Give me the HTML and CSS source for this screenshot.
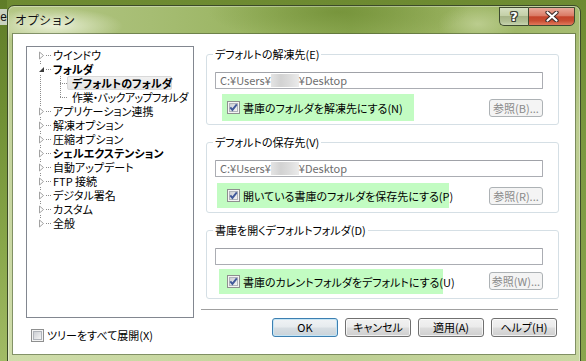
FILE: index.html
```html
<!DOCTYPE html>
<html lang="ja">
<head>
<meta charset="utf-8">
<title>オプション</title>
<link rel="stylesheet" href="styles.css">
</head>
<body>
<svg class="defs" width="0" height="0">
  <defs>
    <linearGradient id="cbfill" x1="0" y1="0" x2="1" y2="1">
      <stop offset="0" stop-color="#c9ccd1"/>
      <stop offset="1" stop-color="#f7f7f7"/>
    </linearGradient>
  </defs>
</svg>
<div class="desk-left"><div class="peek">e</div></div>
<div class="window">
  <div class="titlebar">
    <span class="title">オプション</span>
    <div class="caption-btns">
      <div class="cbtn help"><span>?</span></div>
      <div class="cbtn close">
        <svg width="16" height="11" viewBox="0 0 16 11">
          <path d="M3.5 1.5 L12.5 9.5 M12.5 1.5 L3.5 9.5" stroke="#3a2a28" stroke-width="4.2" stroke-linecap="round"/>
          <path d="M3.5 1.5 L12.5 9.5 M12.5 1.5 L3.5 9.5" stroke="#ffffff" stroke-width="2.2" stroke-linecap="round"/>
        </svg>
      </div>
    </div>
  </div>
  <div class="client">
    <div class="left-col">
      <div class="tree">
        <div class="row root"><span class="exp"><svg width="7" height="9" viewBox="0 0 7 9"><path d="M1.5 1 L5.5 4.5 L1.5 8 Z" fill="#fff" stroke="#a2a2a2"/></svg></span><span class="hd"></span><span class="lbl">ウインドウ</span></div>
        <div class="row root"><span class="exp"><svg width="7" height="9" viewBox="0 0 7 9"><path d="M6 2 L6 7 L1 7 Z" fill="#3c3c3c"/></svg></span><span class="hd"></span><span class="lbl bold">フォルダ</span></div>
        <div class="row child"><span class="conn mid"></span><span class="lbl bold sel">デフォルトのフォルダ</span></div>
        <div class="row child"><span class="conn last"></span><span class="lbl tight">作業・バックアップフォルダ</span></div>
        <div class="row root"><span class="exp"><svg width="7" height="9" viewBox="0 0 7 9"><path d="M1.5 1 L5.5 4.5 L1.5 8 Z" fill="#fff" stroke="#a2a2a2"/></svg></span><span class="hd"></span><span class="lbl">アプリケーション連携</span></div>
        <div class="row root"><span class="exp"><svg width="7" height="9" viewBox="0 0 7 9"><path d="M1.5 1 L5.5 4.5 L1.5 8 Z" fill="#fff" stroke="#a2a2a2"/></svg></span><span class="hd"></span><span class="lbl">解凍オプション</span></div>
        <div class="row root"><span class="exp"><svg width="7" height="9" viewBox="0 0 7 9"><path d="M1.5 1 L5.5 4.5 L1.5 8 Z" fill="#fff" stroke="#a2a2a2"/></svg></span><span class="hd"></span><span class="lbl">圧縮オプション</span></div>
        <div class="row root"><span class="exp"><svg width="7" height="9" viewBox="0 0 7 9"><path d="M1.5 1 L5.5 4.5 L1.5 8 Z" fill="#fff" stroke="#a2a2a2"/></svg></span><span class="hd"></span><span class="lbl bold">シェルエクステンション</span></div>
        <div class="row root"><span class="exp"><svg width="7" height="9" viewBox="0 0 7 9"><path d="M1.5 1 L5.5 4.5 L1.5 8 Z" fill="#fff" stroke="#a2a2a2"/></svg></span><span class="hd"></span><span class="lbl">自動アップデート</span></div>
        <div class="row root"><span class="exp"><svg width="7" height="9" viewBox="0 0 7 9"><path d="M1.5 1 L5.5 4.5 L1.5 8 Z" fill="#fff" stroke="#a2a2a2"/></svg></span><span class="hd"></span><span class="lbl">FTP 接続</span></div>
        <div class="row root"><span class="exp"><svg width="7" height="9" viewBox="0 0 7 9"><path d="M1.5 1 L5.5 4.5 L1.5 8 Z" fill="#fff" stroke="#a2a2a2"/></svg></span><span class="hd"></span><span class="lbl">デジタル署名</span></div>
        <div class="row root"><span class="exp"><svg width="7" height="9" viewBox="0 0 7 9"><path d="M1.5 1 L5.5 4.5 L1.5 8 Z" fill="#fff" stroke="#a2a2a2"/></svg></span><span class="hd"></span><span class="lbl">カスタム</span></div>
        <div class="row root"><span class="exp"><svg width="7" height="9" viewBox="0 0 7 9"><path d="M1.5 1 L5.5 4.5 L1.5 8 Z" fill="#fff" stroke="#a2a2a2"/></svg></span><span class="hd"></span><span class="lbl">全般</span></div>
      </div>
      <div class="chk-row expand-all">
        <svg class="cb" width="13" height="13" viewBox="0 0 13 13"><rect x="0.5" y="0.5" width="12" height="12" fill="#f4f4f4" stroke="#8e8f8f"/><rect x="2.5" y="2.5" width="8" height="8" fill="url(#cbfill)" stroke="#b0b4ba"/></svg>
        <span>ツリーをすべて展開(X)</span>
      </div>
    </div>
    <div class="right-col">
      <div class="group g1">
        <div class="group-title">デフォルトの解凍先(E)</div>
        <div class="field">C:¥Users¥<span class="blur"></span>¥Desktop</div>
        <div class="opt-row">
          <div class="hl">
            <svg class="cb" width="13" height="13" viewBox="0 0 13 13"><rect x="0.5" y="0.5" width="12" height="12" fill="#f4f4f4" stroke="#8e8f8f"/><rect x="2.5" y="2.5" width="8" height="8" fill="url(#cbfill)" stroke="#b0b4ba"/><path d="M3.3 6.4 L5.4 8.9 L9.8 3.4" stroke="#41599a" stroke-width="1.9" fill="none"/></svg>
            <span>書庫のフォルダを解凍先にする(N)</span>
          </div>
          <div class="btn disabled">参照(B)...</div>
        </div>
      </div>
      <div class="group g2">
        <div class="group-title">デフォルトの保存先(V)</div>
        <div class="field">C:¥Users¥<span class="blur"></span>¥Desktop</div>
        <div class="opt-row">
          <div class="hl">
            <svg class="cb" width="13" height="13" viewBox="0 0 13 13"><rect x="0.5" y="0.5" width="12" height="12" fill="#f4f4f4" stroke="#8e8f8f"/><rect x="2.5" y="2.5" width="8" height="8" fill="url(#cbfill)" stroke="#b0b4ba"/><path d="M3.3 6.4 L5.4 8.9 L9.8 3.4" stroke="#41599a" stroke-width="1.9" fill="none"/></svg>
            <span>開いている書庫のフォルダを保存先にする(P)</span>
          </div>
          <div class="btn disabled">参照(R)...</div>
        </div>
      </div>
      <div class="group g3">
        <div class="group-title">書庫を開くデフォルトフォルダ(D)</div>
        <div class="field"></div>
        <div class="opt-row">
          <div class="hl">
            <svg class="cb" width="13" height="13" viewBox="0 0 13 13"><rect x="0.5" y="0.5" width="12" height="12" fill="#f4f4f4" stroke="#8e8f8f"/><rect x="2.5" y="2.5" width="8" height="8" fill="url(#cbfill)" stroke="#b0b4ba"/><path d="M3.3 6.4 L5.4 8.9 L9.8 3.4" stroke="#41599a" stroke-width="1.9" fill="none"/></svg>
            <span>書庫のカレントフォルダをデフォルトにする(U)</span>
          </div>
          <div class="btn disabled">参照(W)...</div>
        </div>
      </div>
      <div class="sep"></div>
      <div class="buttons">
        <div class="btn default">OK</div>
        <div class="btn">キャンセル</div>
        <div class="btn">適用(A)</div>
        <div class="btn">ヘルプ(H)</div>
      </div>
    </div>
  </div>
</div>
</body>
</html>
```

FILE: styles.css
```css
* { box-sizing: border-box; }

html, body {
  margin: 0;
  padding: 0;
}

body {
  width: 586px;
  height: 361px;
  overflow: hidden;
  display: flex;
  align-items: flex-start;
  background: linear-gradient(180deg, #6d8a31 0%, #7b9840 40%, #8aa64e 100%);
  font-family: "Noto Sans CJK JP", "Noto Sans", sans-serif;
  font-size: 11px;
  color: #000;
  font-feature-settings: "palt";
}

.defs { position: absolute; width: 0; height: 0; }

.desk-left {
  width: 7px;
  height: 361px;
  flex: none;
  overflow: hidden;
  background: linear-gradient(180deg, #5f7c28 0%, #6f8e33 30%, #8aa84b 70%, #a2bb66 100%);
}

.peek {
  margin-top: 9px;
  height: 16px;
  width: 7px;
  background: #c9d2c0;
  font-family: "Liberation Sans", sans-serif;
  font-size: 12px;
  line-height: 16px;
  text-align: right;
  direction: rtl;
  color: #111;
}

.window {
  flex: none;
  width: 574px;
  height: 364px;
  margin-top: 5px;
  padding: 0 5px;
  border: 1px solid #3c4a28;
  border-radius: 7px 7px 0 0;
  background:
    radial-gradient(ellipse 70px 18px at 45px 20px, rgba(236, 242, 218, 0.95), rgba(236, 242, 218, 0) 100%),
    radial-gradient(ellipse 130px 30px at 330px 6px, rgba(105, 135, 45, 0.6), rgba(105, 135, 45, 0) 100%),
    radial-gradient(ellipse 40px 20px at 470px 18px, rgba(200, 215, 160, 0.7), rgba(200, 215, 160, 0) 100%),
    linear-gradient(180deg, rgba(255, 255, 255, 0) 0px, rgba(255, 255, 255, 0) 28px, rgba(220, 230, 190, 0.4) 120px, rgba(225, 235, 195, 0.6) 100%),
    linear-gradient(90deg, #b5c786 0%, #a6bd73 25%, #98b35f 45%, #8ba851 60%, #98b15e 75%, #9fb768 88%, #a6bc71 100%);
  box-shadow: inset 0 0 0 1px rgba(255, 255, 255, 0.35);
}

.titlebar {
  height: 28px;
  display: flex;
  justify-content: space-between;
  align-items: flex-start;
}

.title {
  margin: 6px 0 0 2px;
  line-height: 16px;
  font-size: 12px;
  font-feature-settings: normal;
  color: #111;
  text-shadow: 0 0 6px rgba(255, 255, 255, 0.9);
}

.caption-btns {
  display: flex;
  margin-top: 1px;
}

.cbtn {
  height: 19px;
  display: flex;
  align-items: center;
  justify-content: center;
  border: 1px solid #3e4a30;
}

.help {
  width: 29px;
  border-right: none;
  border-radius: 0 0 0 5px;
  background: linear-gradient(180deg, #d6dfc2 0%, #c4d0a8 45%, #a7b488 50%, #b3c197 80%, #c9d5b0 100%);
}

.help span {
  font-family: "DejaVu Sans", sans-serif;
  font-weight: bold;
  font-size: 13px;
  line-height: 13px;
  color: #fff;
  text-shadow: -1px 0 0 #3b3f33, 1px 0 0 #3b3f33, 0 -1px 0 #3b3f33, 0 1px 0 #3b3f33, 1px 1px 0 #3b3f33, -1px -1px 0 #3b3f33, 1px -1px 0 #3b3f33, -1px 1px 0 #3b3f33;
}

.close {
  width: 47px;
  border-radius: 0 0 5px 0;
  background: linear-gradient(180deg, #e9aa9a 0%, #da7b66 45%, #c4432b 52%, #c84d32 75%, #e27a5c 100%);
}

.client {
  height: 320px;
  display: flex;
  align-items: flex-start;
  padding: 12px 0 0 13px;
  background: #fff;
  box-shadow: 0 0 0 1px rgba(70, 85, 50, 0.55);
}

/* ---------- left column ---------- */
.left-col {
  width: 168px;
  flex: none;
}

.tree {
  height: 272px;
  padding-top: 1px;
  border: 1px solid #828790;
  background-image: repeating-linear-gradient(180deg, #8c8c8c 0 1px, transparent 1px 2px);
  background-size: 1px 168px;
  background-position: 13px 8px;
  background-repeat: no-repeat;
}

.row {
  height: 14px;
  display: flex;
  align-items: center;
  white-space: nowrap;
  line-height: 14px;
}

.row.root { padding-left: 11px; }
.row.child { padding-left: 33px; }

.exp {
  width: 7px;
  height: 9px;
  display: flex;
  background: #fff;
}

.hd {
  width: 6px;
  height: 1px;
  margin-left: 1px;
  background-image: repeating-linear-gradient(90deg, #8c8c8c 0 1px, transparent 1px 2px);
}

.lbl { margin-left: 1px; }
.bold { font-weight: bold; }
.tight { letter-spacing: -0.6px; }

.conn {
  width: 7px;
  height: 14px;
  flex: none;
  background-image:
    repeating-linear-gradient(180deg, #8c8c8c 0 1px, transparent 1px 2px),
    repeating-linear-gradient(90deg, #8c8c8c 0 1px, transparent 1px 2px);
  background-repeat: no-repeat;
  background-position: 0 0, 0 7px;
  background-size: 1px 14px, 7px 1px;
}

.conn.last { background-size: 1px 8px, 7px 1px; }

.child .lbl {
  margin-left: 0;
  padding: 0 4px 0 5px;
  height: 14px;
  border: 1px solid transparent;
  border-left: none;
  line-height: 12px;
}

.child .lbl.sel {
  width: 105px;
  background: linear-gradient(180deg, #f1f1f1, #e4e4e4);
  border: 1px solid #d9d9d9;
  border-radius: 2px;
  padding-left: 4px;
}

.chk-row {
  display: flex;
  align-items: center;
  white-space: nowrap;
}

.expand-all {
  margin-top: 9px;
  padding-left: 5px;
}

.cb { flex: none; display: block; }
.chk-row span { margin-left: 3px; }

/* ---------- right column ---------- */
.right-col {
  width: 358px;
  flex: none;
  margin-left: 7px;
}

.group {
  margin: 17px 0 0 5px;
  width: 353px;
  padding: 0 15px var(--pb) 8px;
  border: 1px solid #d5dfe5;
  border-radius: 3px;
}

.g1 { margin-top: 8px; --pb: 3px; --fm: 10px; --rm: 5px; --hl-ml: 7px; --hl-w: 192px; --hl-h: 27px; --hl-pl: 5px; --bm: 5px; }
.g2 { --pb: 4px; --fm: 10px; --rm: 6px; --hl-ml: 2px; --hl-w: 232px; --hl-h: 25px; --hl-pl: 10px; --bm: 4px; }
.g3 { --pb: 4px; --fm: 10px; --rm: 4px; --hl-ml: 4px; --hl-w: 224px; --hl-h: 25px; --hl-pl: 8px; --bm: 3px; }

.group-title {
  display: table;
  margin: -9px 0 0 -2px;
  padding: 0 2px;
  line-height: 16px;
  background: #fff;
  white-space: nowrap;
}

.field {
  margin-top: var(--fm);
  height: 17px;
  border: 1px solid #abadb3;
  border-top-color: #a0a2a8;
  border-radius: 1px;
  padding-left: 4px;
  line-height: 15px;
  color: #6d6d6d;
  white-space: nowrap;
  font-feature-settings: normal;
}

.blur {
  display: inline-block;
  width: 28px;
  height: 13px;
  vertical-align: -2px;
  background: linear-gradient(90deg, #e4e4e4 0%, #d2d2d2 35%, #dcdcdc 65%, #ebebeb 100%);
}

.opt-row {
  margin-top: var(--rm);
  display: flex;
  justify-content: space-between;
  align-items: flex-start;
}

.hl {
  margin-left: var(--hl-ml);
  width: var(--hl-w);
  height: var(--hl-h);
  padding-left: var(--hl-pl);
  display: flex;
  align-items: center;
  background: #c2fcc2;
  white-space: nowrap;
}

.hl span { margin-left: 3px; }

.btn {
  height: 19px;
  width: 66px;
  display: flex;
  align-items: center;
  justify-content: center;
  border: 1px solid #707070;
  border-radius: 3px;
  background: linear-gradient(180deg, #f2f2f2 0%, #ebebeb 48%, #dddddd 52%, #cfcfcf 100%);
  box-shadow: inset 0 0 0 1px rgba(255, 255, 255, 0.7);
  line-height: 15px;
  white-space: nowrap;
}

.opt-row .btn {
  width: 54px;
  height: 18px;
  margin-top: var(--bm);
}

.btn.disabled {
  border-color: #adb2b5;
  background: #f4f4f4;
  color: #8a8a8a;
  box-shadow: none;
}

.btn.default {
  border-color: #3c7fb1;
  background: linear-gradient(180deg, #f0f3f5 0%, #e6ebee 48%, #d7dee3 52%, #cad3d9 100%);
  box-shadow: inset 0 0 0 1px #c4e5f6;
}

.sep {
  margin-top: 10px;
  width: 357px;
  height: 2px;
  border-top: 1px solid #a0a0a0;
  border-bottom: 1px solid #fff;
}

.buttons {
  margin-top: 7px;
  padding-right: 2px;
  display: flex;
  justify-content: flex-end;
  gap: 7px;
}
```
